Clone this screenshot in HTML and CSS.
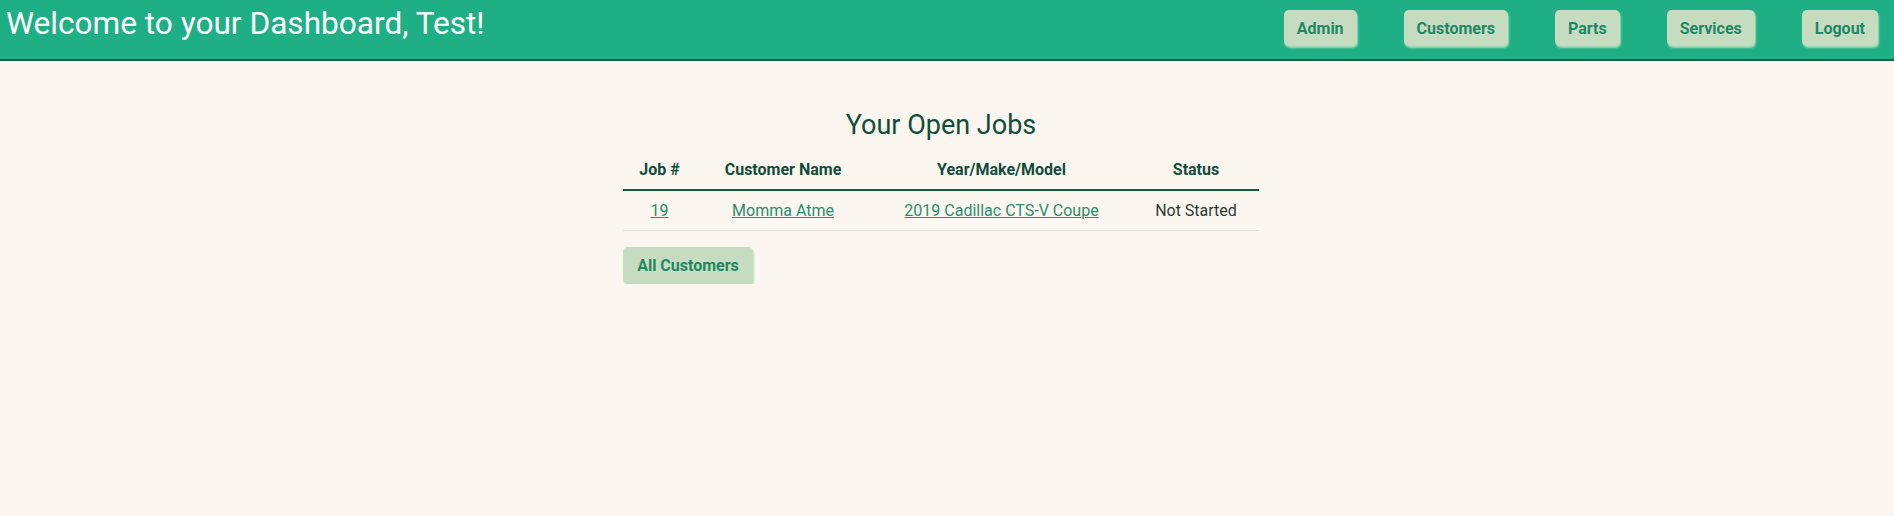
FILE: index.html
```html
<!DOCTYPE html>
<html>
<head>
<meta charset="utf-8">
<link rel="stylesheet" href="styles.css">
</head>
<body>
<header class="topbar">
  <h1 class="welcome">Welcome to your Dashboard, Test!</h1>
  <nav class="nav">
    <a class="btn nav-btn" href="#">Admin</a>
    <a class="btn nav-btn" href="#">Customers</a>
    <a class="btn nav-btn" href="#">Parts</a>
    <a class="btn nav-btn" href="#">Services</a>
    <a class="btn nav-btn" href="#">Logout</a>
  </nav>
</header>
<main class="content">
  <section class="jobs">
    <h2 class="jobs-title">Your Open Jobs</h2>
    <table class="jobs-table">
      <colgroup>
        <col class="c1"><col class="c2"><col class="c3"><col class="c4">
      </colgroup>
      <thead>
        <tr><th>Job #</th><th>Customer Name</th><th>Year/Make/Model</th><th>Status</th></tr>
      </thead>
      <tbody>
        <tr>
          <td><a href="#">19</a></td>
          <td><a href="#">Momma Atme</a></td>
          <td><a href="#">2019 Cadillac CTS-V Coupe</a></td>
          <td class="status">Not Started</td>
        </tr>
      </tbody>
    </table>
    <a class="btn all-btn" href="#">All Customers</a>
  </section>
</main>
</body>
</html>
```
FILE: styles.css
```css
html, body {
  margin: 0;
  padding: 0;
}
body {
  background: #fbf6ef;
  font-family: Roboto, "Noto Sans", sans-serif;
  color: #124d3b;
}
.topbar {
  height: 59px;
  background: #1eaf84;
  border-bottom: 2px solid #165c44;
  display: flex;
  align-items: flex-start;
  justify-content: space-between;
  padding: 0 16px 0 6px;
}
.welcome {
  margin: 5px 0 0 0;
  font-size: 31.6px;
  font-weight: normal;
  color: #ffffff;
  line-height: 38px;
}
.nav {
  display: flex;
  gap: 47px;
  margin-top: 10px;
}
.btn {
  display: inline-flex;
  align-items: center;
  justify-content: center;
  height: 36px;
  box-sizing: border-box;
  background: #c6dcc0;
  color: #1f8765;
  font-weight: bold;
  font-size: 16px;
  text-decoration: none;
  border-radius: 5px;
  box-shadow: 1px 2px 2px rgba(170, 225, 185, 0.9);
}
.nav-btn {
  padding: 0 13px;
}
.content {
  padding-right: 12px;
}
.jobs {
  width: 636px;
  margin: 0 auto;
}
.jobs-title {
  margin: 48px 0 0 0;
  text-align: center;
  font-size: 27px;
  font-weight: normal;
  line-height: 32px;
  color: #124d3b;
}
.jobs-table {
  width: 636px;
  table-layout: fixed;
  border-collapse: collapse;
  margin-top: 8px;
}
.c1 { width: 73px; }
.c2 { width: 174px; }
.c3 { width: 263px; }
.c4 { width: 126px; }
.jobs-table th {
  font-size: 16px;
  font-weight: bold;
  height: 40px;
  border-bottom: 2px solid #165c44;
  padding: 0;
  text-align: center;
  vertical-align: middle;
  color: #124d3b;
}
.jobs-table td {
  font-size: 16px;
  height: 39px;
  padding: 0;
  text-align: center;
  vertical-align: middle;
  border-bottom: 1px solid #dde3e3;
}
.jobs-table td a {
  color: #2b8d6e;
  text-decoration: underline;
}
.jobs-table td.status {
  color: #2f3a36;
}
.all-btn {
  margin-top: 16px;
  width: 130px;
  height: 37px;
}
```
